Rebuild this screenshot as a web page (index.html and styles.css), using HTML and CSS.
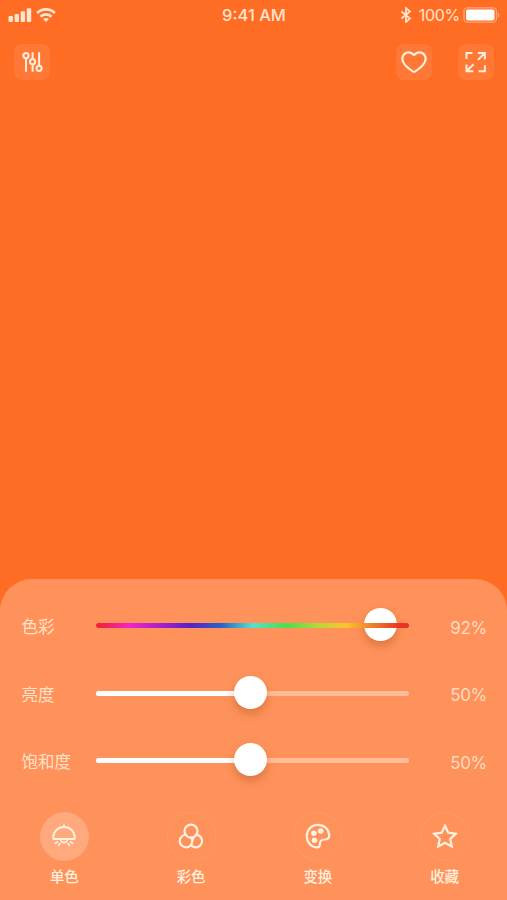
FILE: index.html
```html
<!DOCTYPE html>
<html lang="zh-CN">
<head>
    <meta charset="utf-8">
    <title>色彩</title>
    <link rel="stylesheet" href="styles.css">
</head>
<body>
    <div class="screen">
        <!-- status bar -->
        <div class="status-bar">
            <div class="status-left">
                <svg width="24" height="14" viewBox="0 0 24 14" fill="currentColor">
                    <rect x="0.5" y="8" width="4.4" height="6" rx="1"/>
                    <rect x="6.6" y="6" width="4.4" height="8" rx="1"/>
                    <rect x="12.7" y="3.3" width="4.4" height="10.7" rx="1"/>
                    <rect x="18.8" y="0.3" width="4.4" height="13.7" rx="1"/>
                </svg>
                <svg width="20" height="14" viewBox="0 0 20 14" fill="none" stroke="currentColor" stroke-width="2.7">
                    <path d="M1.2 5.1C6 .2 14 .2 18.8 5.1M4.500 8.700c3-3 8-3 11 0"/>
                    <path d="M10 14L7 11c1.700-1.500 4.300-1.500 6 0z" fill="currentColor" stroke="none"/>
                </svg>
            </div>
            <div class="status-time">9:41 AM</div>
            <div class="status-right">
                <svg width="12" height="16" viewBox="0 0 12 16" fill="none" stroke="currentColor" stroke-width="1.7">
                    <path d="M1.500 4.500l8.500 7L6 15V1l4 3.500-8.500 7"/>
                </svg>
                <span class="battery-text">100%</span>
                <svg width="37" height="16" viewBox="0 0 37 16">
                    <rect x="1" y="0.8" width="32.500" height="14.400" rx="3.500" fill="none" stroke="#ffa679" stroke-width="1.300"/>
                    <rect x="3" y="2.500" width="28.500" height="11" rx="1.800" fill="#fff"/>
                    <path d="M34.800 5.200c2 1 2 4.600 0 5.600z" fill="#ffa679"/>
                </svg>
            </div>
        </div>

        <!-- top buttons -->
        <div class="toolbar">
            <button class="tool-btn">
                <svg width="24" height="24" viewBox="0 0 24 24" fill="none" stroke="currentColor" stroke-width="2">
                    <circle cx="6" cy="5.600" r="2.600"/>
                    <path d="M6 8.200v13.600M12.600 2.200v6.700M12.600 14.100v7.700M19.100 2.200v13.500"/>
                    <circle cx="12.600" cy="11.700" r="2.600"/>
                    <circle cx="19.100" cy="18.300" r="2.600"/>
                </svg>
            </button>
            <div class="tool-group">
                <button class="tool-btn">
                    <svg width="28" height="26" viewBox="0 0 28 26" fill="none" stroke="currentColor" stroke-width="2.200" stroke-linejoin="round">
                        <path d="M14 6.200C11.400 2.500 6.500 2.500 4.100 5.300 1.200 8.800 2.400 13.100 5.500 16.500c2.200 2.300 5.100 4.500 7.200 5.900.9.500 1.700.5 2.600 0 2.100-1.400 5-3.600 7.200-5.900C25.600 13.100 26.800 8.800 23.900 5.300 21.500 2.500 16.600 2.500 14 6.200z"/>
                    </svg>
                </button>
                <button class="tool-btn">
                    <svg width="24" height="24" viewBox="0 0 24 24" fill="none" stroke="currentColor" stroke-width="2">
                        <path d="M2.500 9V3H8.500M14 3h6.900v6.600M20.600 3.300l-6.600 6.600M2.500 14.500v6.700H9.500M2.800 20.900l6.800-6.700M20.900 15.200v6H14.600"/>
                    </svg>
                </button>
            </div>
        </div>

        <!-- bottom panel -->
        <div class="panel">
            <div class="sliders">
                <div class="slider-row">
                    <span class="slider-label">色彩</span>
                    <div class="slider">
                        <div class="thumb" style="left: 90.9%"></div>
                        <div class="track track-hue"></div>
                    </div>
                    <span class="slider-value">92%</span>
                </div>
                <div class="slider-row">
                    <span class="slider-label">亮度</span>
                    <div class="slider">
                        <div class="track"><div class="fill" style="width: 49.4%"></div></div>
                        <div class="thumb" style="left: 49.4%"></div>
                    </div>
                    <span class="slider-value">50%</span>
                </div>
                <div class="slider-row">
                    <span class="slider-label">饱和度</span>
                    <div class="slider">
                        <div class="track"><div class="fill" style="width: 49.4%"></div></div>
                        <div class="thumb" style="left: 49.4%"></div>
                    </div>
                    <span class="slider-value">50%</span>
                </div>
            </div>

            <div class="tabs">
                <div class="tab active">
                    <div class="tab-icon">
                        <svg width="28" height="28" viewBox="0 0 28 28" fill="none" stroke="currentColor" stroke-width="1.900" stroke-linecap="round" stroke-linejoin="round">
                            <path d="M14 3.200V5M3.200 16C3.200 9.500 7.800 5 14 5s10.800 4.500 10.800 11c0 .6-.4 1-1 1H4.200c-.6 0-1-.4-1-1z"/>
                            <path d="M10.800 18.500c1 2.700 5.400 2.700 6.400 0M7.300 19.800l-1.800 1.600M9.900 21.400l-1.200 2M18.100 21.400l1.200 2M20.700 19.800l1.800 1.600" stroke-width="1.700"/>
                        </svg>
                    </div>
                    <span class="tab-name">单色</span>
                </div>
                <div class="tab">
                    <div class="tab-icon">
                        <svg width="28" height="28" viewBox="0 0 28 28" fill="none" stroke="currentColor" stroke-width="2.200" stroke-linecap="round">
                            <circle cx="14" cy="9.100" r="6.500"/>
                            <path d="M8.700 12.700a6.300 6.300 0 1 0 6.600 6.300c0-1.300-.4-2.400-1.100-3.400"/>
                            <path d="M19.300 12.700a6.300 6.300 0 1 1-4.500 11.200M15.300 19c.1-1.100.6-2.300 1.300-3.100"/>
                        </svg>
                    </div>
                    <span class="tab-name">彩色</span>
                </div>
                <div class="tab">
                    <div class="tab-icon">
                        <svg width="28" height="28" viewBox="0 0 28 28" fill="none" stroke="currentColor" stroke-width="2.200" stroke-linejoin="round">
                            <path d="M13.800 2.900C7.200 2.900 2.800 8 2.800 14.300c0 6.400 4.700 11 10.300 11.100 1.800 0 2.700-.9 2.700-2.600 0-3.700 1-5.300 4.800-5.300 3.300 0 4.600-1.500 4.600-4.300 0-6.100-5.300-10.300-11.400-10.300z"/>
                            <g fill="currentColor" stroke="none">
                                <circle cx="9.900" cy="11.300" r="2.800"/>
                                <circle cx="16.700" cy="9" r="2.800"/>
                                <circle cx="10.500" cy="18.300" r="2.800"/>
                            </g>
                        </svg>
                    </div>
                    <span class="tab-name">变换</span>
                </div>
                <div class="tab">
                    <div class="tab-icon">
                        <svg width="28" height="28" viewBox="0 0 28 28" fill="none" stroke="currentColor" stroke-width="2.200">
                            <path d="M14 3.800l3.300 6.900 7.500 1-5.500 5.300 1.400 7.400-6.700-3.600-6.700 3.600L8.700 17l-5.500-5.300 7.500-1z"/>
                        </svg>
                    </div>
                    <span class="tab-name">收藏</span>
                </div>
            </div>
        </div>
    </div>
</body>
</html>
```
FILE: styles.css
```css
* {
    box-sizing: border-box;
}

body {
    margin: 0;
    background-color: #ff6c23;
    color: #fff0df;
    font-family: Inter, "Noto Sans CJK SC", sans-serif;
}

.screen {
    display: flex;
    flex-direction: column;
    height: 900px;
    overflow: hidden;
}

svg {
    display: block;
}

/* status bar */
.status-bar {
    display: grid;
    grid-template-columns: 1fr auto 1fr;
    align-items: center;
    height: 30px;
    padding: 0 7px 0 8px;
    color: #ffe5d0;
}

.status-left {
    display: flex;
    gap: 4px;
}

.status-time {
    font-size: 16.5px;
    font-weight: 500;
}

.status-right {
    display: flex;
    align-items: center;
    justify-content: flex-end;
}

.battery-text {
    margin: 0 3px 0 7px;
    font-size: 16px;
    letter-spacing: -0.3px;
}

/* top buttons */
.toolbar {
    display: flex;
    justify-content: space-between;
    padding: 14px 13px 0 14px;
}

.tool-group {
    display: flex;
    gap: 26px;
}

.tool-btn {
    display: flex;
    align-items: center;
    justify-content: center;
    width: 36px;
    height: 36px;
    padding: 0;
    border: none;
    border-radius: 8px;
    background-color: #ff7835;
    color: #ffeedc;
}

/* bottom panel */
.panel {
    height: 321px;
    margin-top: auto;
    padding-top: 13px;
    border-radius: 32px 32px 0 0;
    background-color: #ff925a;
}

.slider-row {
    display: grid;
    grid-template-columns: 74px 313px 1fr;
    align-items: center;
    height: 67.5px;
    padding: 0 20px 0 21.5px;
}

.slider-label {
    padding-top: 3px;
    font-size: 16.5px;
    line-height: 24px;
    color: #ffe3c9;
}

.slider-value {
    padding-top: 4px;
    font-size: 17px;
    letter-spacing: -0.3px;
    text-align: right;
    color: #ffdcc1;
}

.slider {
    position: relative;
}

.track {
    height: 5px;
    border-radius: 3px;
    background-color: #ffbc99;
}

.track-hue {
    position: relative;
    background: linear-gradient(90deg, #f5222d 0%, #f423c8 11%, #5a20c8 30%, #2b62c4 40%, #55e0d0 50%, #4be04b 61%, #b4d83a 71%, #ffc12e 80%, #e8722a 90%, #ea3323 97%);
}

.fill {
    height: 5px;
    border-radius: 3px;
    background-color: #fff;
}

.thumb {
    position: absolute;
    top: -15px;
    width: 33px;
    height: 33px;
    margin-left: -16.5px;
    border-radius: 50%;
    background-color: #fff;
    box-shadow: 0 5px 10px rgba(150, 70, 20, 0.35);
}

/* tabs */
.tabs {
    display: grid;
    grid-template-columns: repeat(4, 126.75px);
    padding-top: 17px;
    padding-left: 1px;
}

.tab {
    display: flex;
    flex-direction: column;
    align-items: center;
}

.tab-icon {
    display: flex;
    align-items: center;
    justify-content: center;
    width: 49px;
    height: 49px;
    border: 1px solid #ff9b66;
    border-radius: 50%;
}

.active .tab-icon {
    border-color: #ffa97d;
    background-color: #ffa97d;
}

.tab-name {
    margin-top: 5px;
    font-size: 14.5px;
    font-weight: 500;
    line-height: 22px;
}
```
